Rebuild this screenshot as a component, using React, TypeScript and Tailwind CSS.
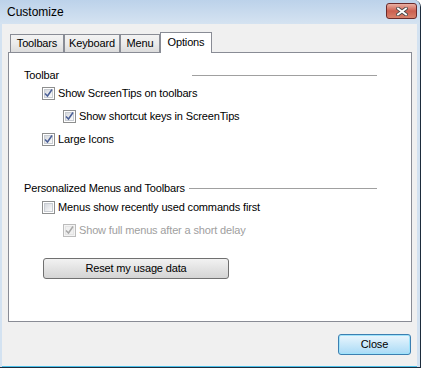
import React from 'react';

const font = { fontFamily: '"Liberation Sans", Arial, sans-serif' };

const Check: React.FC<{ checked?: boolean; disabled?: boolean }> = ({ checked, disabled }) => (
  <span
    className={`flex h-[13px] w-[13px] shrink-0 items-center justify-center border ${
      disabled ? 'border-[#bcbcbc] bg-[#f4f4f4]' : 'border-[#8e8f8f] bg-white'
    }`}
  >
    <span
      className={`flex h-[9px] w-[9px] items-center justify-center border ${
        disabled
          ? 'border-[#e4e4e4] bg-[#f0f0f0]'
          : 'border-[#c8ccd2] bg-gradient-to-br from-[#d6d9de] to-[#fbfbfb]'
      }`}
    >
      {checked && (
        <svg width="9" height="9" viewBox="0 0 9 9" className="overflow-visible">
          <path
            d="M1 4.5 L3.5 7 L8 0.5"
            fill="none"
            stroke={disabled ? '#a8a8a8' : '#4a5f97'}
            strokeWidth="1.5"
          />
        </svg>
      )}
    </span>
  </span>
);

interface RowProps {
  label: string;
  checked?: boolean;
  disabled?: boolean;
  indent: string;
  top: string;
}

const CheckRow: React.FC<RowProps> = ({ label, checked, disabled, indent, top }) => (
  <div className={`flex h-[15px] items-center gap-[3px] ${indent} ${top}`}>
    <Check checked={checked} disabled={disabled} />
    <span className={`whitespace-nowrap ${disabled ? 'text-[#a0a0a0]' : 'text-black'}`}>{label}</span>
  </div>
);

const GroupLabel: React.FC<{ label: string; width: string; top: string }> = ({ label, width, top }) => (
  <div className={`flex h-[16px] items-center pl-[15px] pr-[34px] ${top}`}>
    <span className={`${width} shrink-0 whitespace-nowrap text-black`}>{label}</span>
    <span className="ml-[4px] h-px flex-1 bg-[#a0a0a0]" />
  </div>
);

const tabs = ['Toolbars', 'Keyboard', 'Menu'];
const tabWidths = ['w-[54px]', 'w-[56px]', 'w-[40px]'];

export default function App() {
  return (
    <div className="h-[368px] w-[423px] bg-white text-[11px] tracking-[-0.15px]" style={font}>
      <div className="flex h-[368px] w-[421px] flex-col overflow-hidden rounded-tr-[7px] border-r border-b border-[#1d2c3c] bg-[#d3e2f1]">
        {/* title bar */}
        <div className="flex h-[24px] shrink-0 items-center justify-between bg-gradient-to-b from-[#bcd2ea] to-[#d5e3f1] pl-[7px] pr-[3px]">
          <span className="text-[12px] tracking-normal text-black">Customize</span>
          <div className="mb-[2px] flex h-[16px] w-[31px] items-center justify-center rounded-[3px] border border-[#6b2a2a] bg-gradient-to-b from-[#e9b0a4] via-[#cb5f50] to-[#d8826c]">
            <svg width="12" height="9" viewBox="0 0 12 9">
              <path d="M2 1.5 L10 7.5 M10 1.5 L2 7.5" stroke="#4a4a4a" strokeWidth="3.6" strokeLinecap="square" />
              <path d="M2 1.5 L10 7.5 M10 1.5 L2 7.5" stroke="#ffffff" strokeWidth="1.9" strokeLinecap="square" />
            </svg>
          </div>
        </div>

        {/* body */}
        <div className="ml-[2px] mr-[3px] flex flex-1 flex-col border-b border-[#4cc0ea] bg-[#f0f0f0] pt-[8px] pl-[6px] pr-[5px]">
          <div className="flex h-[20px] items-end pl-[2px]">
            {tabs.map((t, i) => (
              <div
                key={t}
                className={`${tabWidths[i]} flex h-[18px] items-center justify-center border border-b-0 border-[#898c95] bg-gradient-to-b from-[#f3f3f3] via-[#ebebeb] to-[#dcdcdc] text-black`}
              >
                {t}
              </div>
            ))}
            <div className="relative z-10 -mb-px flex h-[21px] w-[52px] items-center justify-center border border-b-0 border-[#898c95] bg-white pb-[2px] text-black">
              Options
            </div>
          </div>

          <div className="flex h-[270px] flex-col border border-[#898c95] bg-white">
            <GroupLabel label="Toolbar" width="w-[164px]" top="mt-[14px]" />
            <CheckRow label="Show ScreenTips on toolbars" checked indent="ml-[33px]" top="mt-[3px]" />
            <CheckRow label="Show shortcut keys in ScreenTips" checked indent="ml-[54px]" top="mt-[8px]" />
            <CheckRow label="Large Icons" checked indent="ml-[33px]" top="mt-[8px]" />

            <GroupLabel label="Personalized Menus and Toolbars" width="w-auto" top="mt-[33px]" />
            <CheckRow label="Menus show recently used commands first" indent="ml-[33px]" top="mt-[4px]" />
            <CheckRow label="Show full menus after a short delay" checked disabled indent="ml-[54px]" top="mt-[8px]" />

            <button className="ml-[34px] mt-[20px] flex h-[21px] w-[186px] items-center justify-center rounded-[3px] border border-[#707070] bg-gradient-to-b from-[#f2f2f2] to-[#d4d4d4] text-black">
              Reset my usage data
            </button>
          </div>

          <div className="mt-[12px] flex justify-end pr-[1px]">
            <button className="flex h-[21px] w-[73px] items-center justify-center rounded-[3px] border border-[#3c7fb1] bg-gradient-to-b from-[#eaf6fd] to-[#a9daf6] text-black shadow-[inset_0_0_0_1px_#9fe3fb]">
              Close
            </button>
          </div>
        </div>
      </div>
    </div>
  );
}
